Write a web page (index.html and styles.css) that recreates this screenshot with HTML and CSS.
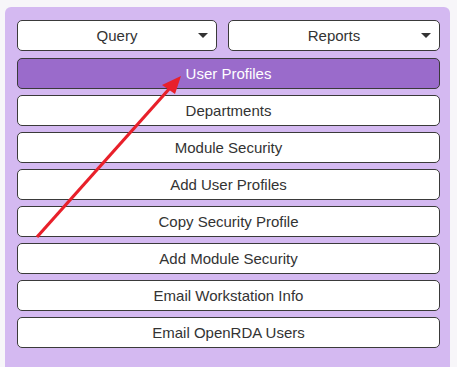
FILE: index.html
```html
<html lang="en">
<head>
    <meta charset="UTF-8">
    <meta name="viewport" content="width=device-width, initial-scale=1.0">
    <title>Security Menu</title>
    <link rel="stylesheet" href="styles.css">
</head>
<body>
    <div class="panel">
        <div class="menu-selects">
            <div class="select-box">
                <span>Query</span>
                <span class="caret"></span>
            </div>
            <div class="select-box">
                <span>Reports</span>
                <span class="caret"></span>
            </div>
        </div>
        <button class="menu-btn active">User Profiles</button>
        <button class="menu-btn">Departments</button>
        <button class="menu-btn">Module Security</button>
        <button class="menu-btn">Add User Profiles</button>
        <button class="menu-btn">Copy Security Profile</button>
        <button class="menu-btn">Add Module Security</button>
        <button class="menu-btn">Email Workstation Info</button>
        <button class="menu-btn">Email OpenRDA Users</button>

        <svg class="pointer" width="457" height="367" viewBox="0 0 457 367">
            <line x1="37" y1="237" x2="170" y2="88" stroke="#e8202a" stroke-width="3.2" />
            <polygon points="181,76 162,85 175,94" fill="#e8202a" />
        </svg>
    </div>
</body>
</html>
```

FILE: styles.css
```css
body {
    margin: 0;
    padding: 0;
    background-color: #f7f6f9;
    font-family: 'Liberation Sans', Arial, sans-serif;
    color: #333;
}

.panel {
    margin: 7px 7px 0 5px;
    padding: 13px 10px 18px 12px;
    min-height: 329px;
    background-color: #d4b9f1;
    border-radius: 6px 6px 0 0;
    display: flex;
    flex-direction: column;
    gap: 6px;
}

.menu-selects {
    display: grid;
    grid-template-columns: 200px 1fr;
    gap: 11px;
    margin-bottom: 1px;
}

.select-box {
    position: relative;
    height: 31px;
    box-sizing: border-box;
    border: 1px solid #3a3a3a;
    border-radius: 5px;
    background-color: #fff;
    display: flex;
    align-items: center;
    justify-content: center;
    font-size: 15px;
    color: #333;
}

.caret {
    position: absolute;
    right: 8px;
    top: 12px;
    width: 0;
    height: 0;
    border-left: 5px solid transparent;
    border-right: 5px solid transparent;
    border-top: 5px solid #333;
}

.menu-btn {
    height: 31px;
    box-sizing: border-box;
    border: 1px solid #3a3a3a;
    border-radius: 5px;
    background-color: #fff;
    font-family: 'Liberation Sans', Arial, sans-serif;
    font-size: 15px;
    color: #333;
    padding: 0;
    cursor: pointer;
}

.menu-btn.active {
    background-color: #9a6bcb;
    color: #fff;
}

.pointer {
    position: absolute;
    left: 0;
    top: 0;
    pointer-events: none;
}
```
